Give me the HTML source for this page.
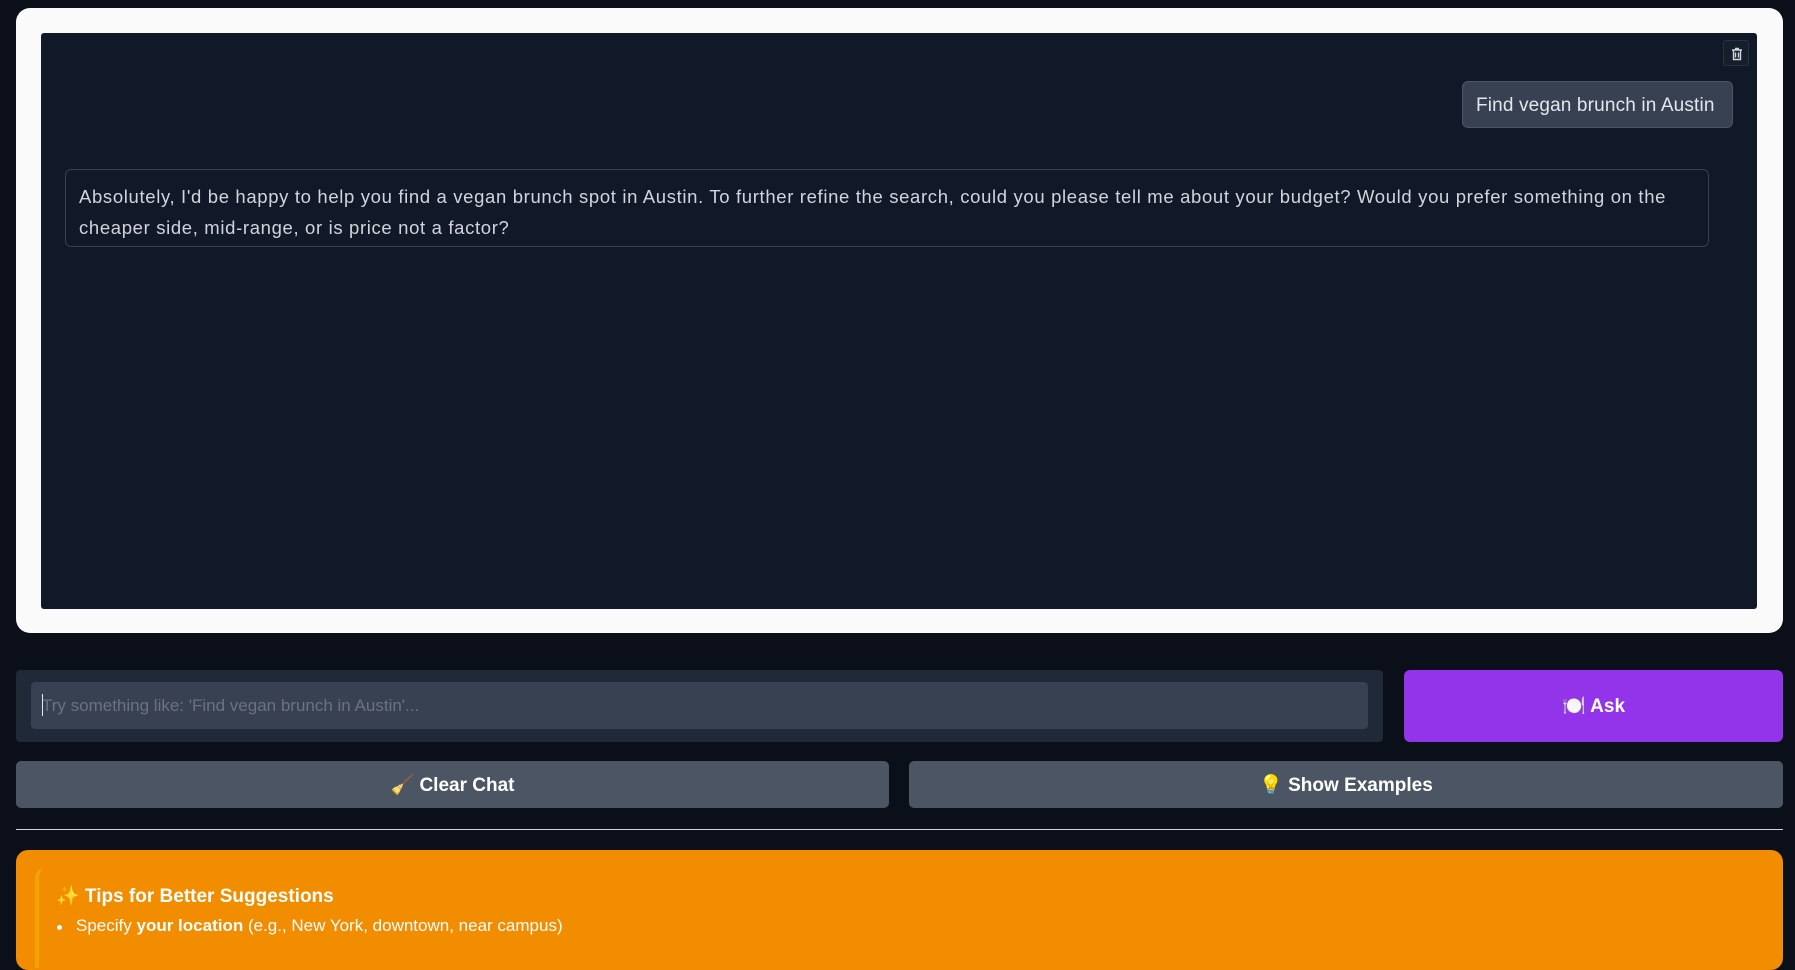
<!DOCTYPE html>
<html><head><meta charset="utf-8"><style>
*{box-sizing:border-box;margin:0;padding:0}
body{width:1795px;height:929px;overflow:hidden;background:#0b0f19;font-family:"Liberation Sans",sans-serif;position:relative}
.card{position:absolute;left:16px;top:8px;width:1767px;height:625px;background:#fafafa;border-radius:14px}
.chat{position:absolute;left:41px;top:33px;width:1716px;height:576px;background:#111827;border-radius:3px}
.trash{position:absolute;left:1723px;top:40px;width:26px;height:26px;border:1px solid #2a3140;border-radius:3px;background:#161d2b}
.user{position:absolute;left:1462px;top:81px;width:271px;height:47px;background:#374151;border:1px solid #4b5563;border-radius:6px;color:#e5e7eb;font-size:19px;line-height:48px;padding-left:13px;letter-spacing:0.15px}
.bot{position:absolute;left:65px;top:169px;width:1644px;height:78px;border:1px solid #374151;border-radius:6px;color:#d1d5db;font-size:18.5px;line-height:31px;padding:11px 13px;white-space:nowrap;letter-spacing:0.65px}
.inwrap{position:absolute;left:16px;top:670px;width:1367px;height:72px;background:#1f2937;border-radius:4px}
.input{position:absolute;left:15px;top:12px;width:1337px;height:47px;background:#374151;border-radius:4px;color:#6b7280;font-size:17px;line-height:47px;padding-left:11px}
.input:before{content:"";position:absolute;left:11px;top:12px;width:1px;height:22px;background:#e5e7eb}
.ask{position:absolute;left:1404px;top:670px;width:379px;height:72px;background:#9333ea;border-radius:6px;color:#fff;font-weight:bold;font-size:19px;line-height:74px;text-align:center}
.btn{position:absolute;top:761px;height:47px;background:#4b5563;border-radius:5px;color:#fff;font-weight:bold;font-size:19px;line-height:50px;text-align:center}
.hr{position:absolute;left:16px;top:829px;width:1767px;height:1px;background:#d1d5db}
.tips{position:absolute;left:16px;top:850px;width:1767px;height:120px;background:#f28c00;border-radius:12px}
.tips .in{position:absolute;left:19px;top:18px;width:1740px;height:100px;border-left:4px solid #f5a300;border-radius:10px 0 0 0}
.tips h3{position:absolute;left:40px;top:34px;color:#fff;font-size:19px}
.tips p{position:absolute;left:60px;top:66px;color:#fff;font-size:17px}
.tips p:before{content:"";position:absolute;left:-19px;top:9px;width:5px;height:5px;border-radius:50%;background:#fff}
</style></head><body>
<div class="card"></div>
<div class="chat"></div>
<div class="trash"><svg width="26" height="26" viewBox="0 0 26 26"><path d="M8 9h10M11 7.5h4M9.5 9.5v9h7v-9M11.5 11.5v5M14.5 11.5v5" stroke="#d1d5db" stroke-width="1.4" fill="none"/></svg></div>
<div class="user">Find vegan brunch in Austin</div>
<div class="bot">Absolutely, I'd be happy to help you find a vegan brunch spot in Austin. To further refine the search, could you please tell me about your budget? Would you prefer something on the<br>cheaper side, mid-range, or is price not a factor?</div>
<div class="inwrap"><div class="input">Try something like: 'Find vegan brunch in Austin'...</div></div>
<div class="ask">🍽️ Ask</div>
<div class="btn" style="left:16px;width:873px">🧹 Clear Chat</div>
<div class="btn" style="left:909px;width:874px">💡 Show Examples</div>
<div class="hr"></div>
<div class="tips"><div class="in"></div><h3>✨ Tips for Better Suggestions</h3><p>Specify <b>your location</b> (e.g., New York, downtown, near campus)</p></div>
</body></html>
